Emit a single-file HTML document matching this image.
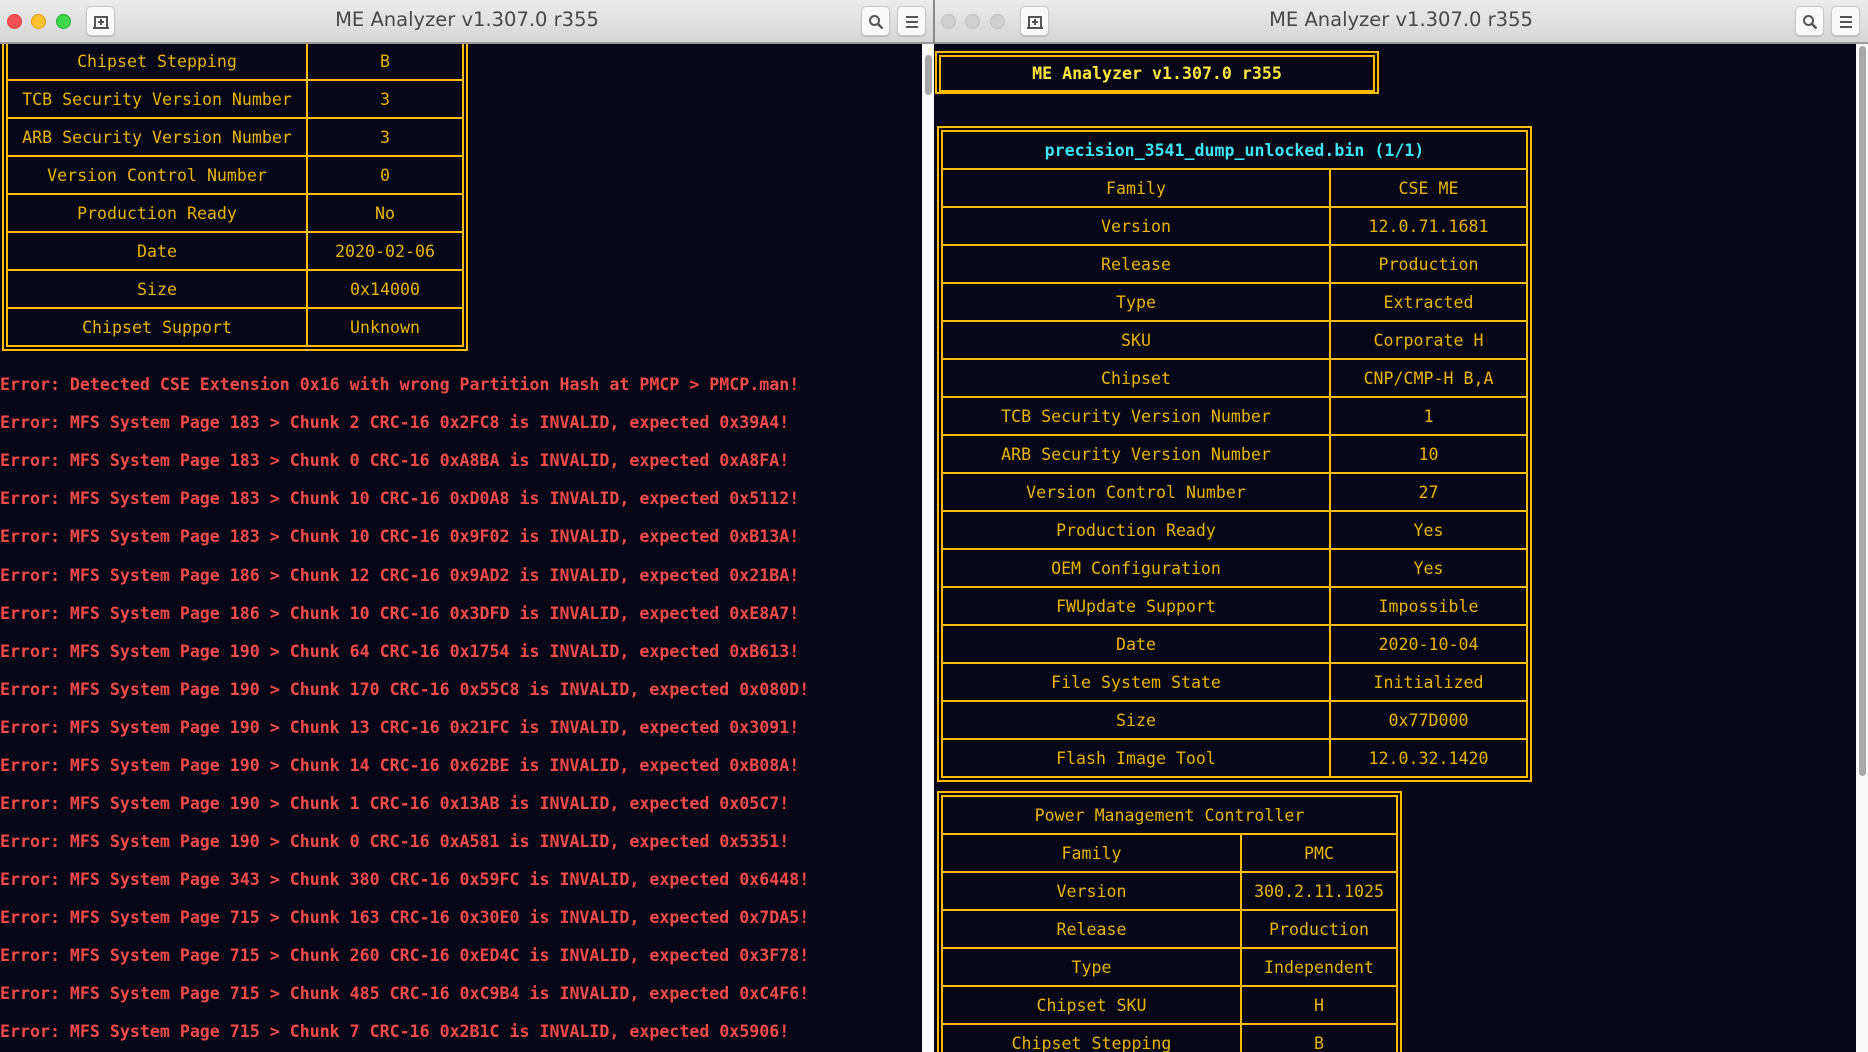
<!DOCTYPE html>
<html><head><meta charset="utf-8">
<style>
*{margin:0;padding:0;box-sizing:border-box}
html,body{width:1868px;height:1052px;overflow:hidden}
body{background:#070717;position:relative;font-family:"DejaVu Sans Mono","Liberation Mono",monospace}
.win{position:absolute;top:0;width:934px;height:1052px;overflow:hidden;background:#070717}
.tb{position:absolute;left:0;top:0;width:934px;height:44px;background:linear-gradient(#ececec,#d6d6d6);border-bottom:2px solid #9a9a9a;z-index:5}
.tb .t{position:absolute;left:0;right:0;top:8px;text-align:center;font-family:"DejaVu Sans","Liberation Sans",sans-serif;font-size:19.5px;color:#484848}
.dot{position:absolute;top:14px;width:15px;height:15px;border-radius:50%}
.btn{position:absolute;top:6px;width:29px;height:30px;background:#fafafa;border:1px solid #c8c8c8;border-radius:5px;box-shadow:0 1px 1px rgba(0,0,0,.15)}
.btn svg{position:absolute;left:6px;top:7px}
.sb{position:absolute;right:0;top:44px;width:12px;bottom:0;background:#fafafa;z-index:4}
.sb i{position:absolute;left:3px;width:7px;background:#a8a8a8;border-radius:4px}
.fr{position:absolute;border:2px solid #ffbb00;padding:2px}
table{border-collapse:collapse;width:100%}
td{border:2px solid #ffbb00;height:38px;text-align:center;color:#e8b400;font-size:16.6px;white-space:pre;padding:0}
.err{position:absolute;left:0;color:#f24a4a;font-weight:bold;font-size:16.6px;white-space:pre}
</style></head><body>

<div class="win" style="left:0">
 <div class="tb">
  <div class="dot" style="left:7px;background:#f25056;border:1px solid #e0443e"></div>
  <div class="dot" style="left:31px;background:#fbc22f;border:1px solid #e1a116"></div>
  <div class="dot" style="left:56px;background:#3ed84a;border:1px solid #27aa35"></div>
  <div class="btn" style="left:86px"><svg width="16" height="16" viewBox="0 0 16 16"><path d="M2 14V3h12v11" fill="none" stroke="#555" stroke-width="2"/><path d="M0 14h16M8 5v6M5 8h6" stroke="#555" stroke-width="2"/></svg></div>
  <div class="t">ME Analyzer v1.307.0 r355</div>
  <div class="btn" style="left:861px"><svg width="16" height="16" viewBox="0 0 16 16"><circle cx="6.5" cy="6.5" r="4.5" fill="none" stroke="#555" stroke-width="2"/><path d="M10 10l4.5 4.5" stroke="#555" stroke-width="2.4"/></svg></div>
  <div class="btn" style="left:897px"><svg width="16" height="16" viewBox="0 0 16 16"><path d="M2 3h12M2 8h12M2 13h12" stroke="#555" stroke-width="2"/></svg></div>
 </div>
 <div class="sb"><i style="top:11px;height:40px"></i></div>
 <div class="fr" style="left:2px;top:37px;width:466px">
  <table>
   <tr><td style="width:300px">Chipset Stepping</td><td>B</td></tr>
   <tr><td>TCB Security Version Number</td><td>3</td></tr>
   <tr><td>ARB Security Version Number</td><td>3</td></tr>
   <tr><td>Version Control Number</td><td>0</td></tr>
   <tr><td>Production Ready</td><td>No</td></tr>
   <tr><td>Date</td><td>2020-02-06</td></tr>
   <tr><td>Size</td><td>0x14000</td></tr>
   <tr><td>Chipset Support</td><td>Unknown</td></tr>
  </table>
 </div>
 <div class="err" style="top:375px">Error: Detected CSE Extension 0x16 with wrong Partition Hash at PMCP &gt; PMCP.man!</div>
 <div class="err" style="top:413px">Error: MFS System Page 183 &gt; Chunk 2 CRC-16 0x2FC8 is INVALID, expected 0x39A4!</div>
 <div class="err" style="top:451px">Error: MFS System Page 183 &gt; Chunk 0 CRC-16 0xA8BA is INVALID, expected 0xA8FA!</div>
 <div class="err" style="top:489px">Error: MFS System Page 183 &gt; Chunk 10 CRC-16 0xD0A8 is INVALID, expected 0x5112!</div>
 <div class="err" style="top:527px">Error: MFS System Page 183 &gt; Chunk 10 CRC-16 0x9F02 is INVALID, expected 0xB13A!</div>
 <div class="err" style="top:566px">Error: MFS System Page 186 &gt; Chunk 12 CRC-16 0x9AD2 is INVALID, expected 0x21BA!</div>
 <div class="err" style="top:604px">Error: MFS System Page 186 &gt; Chunk 10 CRC-16 0x3DFD is INVALID, expected 0xE8A7!</div>
 <div class="err" style="top:642px">Error: MFS System Page 190 &gt; Chunk 64 CRC-16 0x1754 is INVALID, expected 0xB613!</div>
 <div class="err" style="top:680px">Error: MFS System Page 190 &gt; Chunk 170 CRC-16 0x55C8 is INVALID, expected 0x080D!</div>
 <div class="err" style="top:718px">Error: MFS System Page 190 &gt; Chunk 13 CRC-16 0x21FC is INVALID, expected 0x3091!</div>
 <div class="err" style="top:756px">Error: MFS System Page 190 &gt; Chunk 14 CRC-16 0x62BE is INVALID, expected 0xB08A!</div>
 <div class="err" style="top:794px">Error: MFS System Page 190 &gt; Chunk 1 CRC-16 0x13AB is INVALID, expected 0x05C7!</div>
 <div class="err" style="top:832px">Error: MFS System Page 190 &gt; Chunk 0 CRC-16 0xA581 is INVALID, expected 0x5351!</div>
 <div class="err" style="top:870px">Error: MFS System Page 343 &gt; Chunk 380 CRC-16 0x59FC is INVALID, expected 0x6448!</div>
 <div class="err" style="top:908px">Error: MFS System Page 715 &gt; Chunk 163 CRC-16 0x30E0 is INVALID, expected 0x7DA5!</div>
 <div class="err" style="top:946px">Error: MFS System Page 715 &gt; Chunk 260 CRC-16 0xED4C is INVALID, expected 0x3F78!</div>
 <div class="err" style="top:984px">Error: MFS System Page 715 &gt; Chunk 485 CRC-16 0xC9B4 is INVALID, expected 0xC4F6!</div>
 <div class="err" style="top:1022px">Error: MFS System Page 715 &gt; Chunk 7 CRC-16 0x2B1C is INVALID, expected 0x5906!</div>
</div>

<div class="win" style="left:934px">
 <div class="tb">
  <div class="dot" style="left:7px;background:#d0d0d0;border:1px solid #c0c0c0"></div>
  <div class="dot" style="left:31px;background:#d0d0d0;border:1px solid #c0c0c0"></div>
  <div class="dot" style="left:56px;background:#d0d0d0;border:1px solid #c0c0c0"></div>
  <div class="btn" style="left:86px"><svg width="16" height="16" viewBox="0 0 16 16"><path d="M2 14V3h12v11" fill="none" stroke="#555" stroke-width="2"/><path d="M0 14h16M8 5v6M5 8h6" stroke="#555" stroke-width="2"/></svg></div>
  <div class="t">ME Analyzer v1.307.0 r355</div>
  <div class="btn" style="left:861px"><svg width="16" height="16" viewBox="0 0 16 16"><circle cx="6.5" cy="6.5" r="4.5" fill="none" stroke="#555" stroke-width="2"/><path d="M10 10l4.5 4.5" stroke="#555" stroke-width="2.4"/></svg></div>
  <div class="btn" style="left:897px"><svg width="16" height="16" viewBox="0 0 16 16"><path d="M2 3h12M2 8h12M2 13h12" stroke="#555" stroke-width="2"/></svg></div>
 </div>
 <div class="sb"><i style="top:2px;height:730px"></i></div>

 <div class="fr" style="left:2px;top:51px;width:250px;width:249px"></div>
 <div class="fr" style="left:2px;top:51px;width:250px;display:none"></div>
 <div class="fr" style="left:2px;top:51px;width:250px;display:none"></div>
 <div class="fr" style="left:1px;top:51px;width:250px;display:none"></div>
 <div class="fr" style="left:1px;top:51px;width:444px;height:43px;border-color:#ffbb00;background:#070717">
  <table style="height:35px"><tr><td style="color:#ffe640;font-weight:bold;height:35px">ME Analyzer v1.307.0 r355</td></tr></table>
 </div>

 <div class="fr" style="left:3px;top:126px;width:595px">
  <table>
   <tr><td colspan="2" style="color:#3fe6f2;font-weight:bold">precision_3541_dump_unlocked.bin (1/1)</td></tr>
   <tr><td style="width:388px">Family</td><td>CSE ME</td></tr>
   <tr><td>Version</td><td>12.0.71.1681</td></tr>
   <tr><td>Release</td><td>Production</td></tr>
   <tr><td>Type</td><td>Extracted</td></tr>
   <tr><td>SKU</td><td>Corporate H</td></tr>
   <tr><td>Chipset</td><td>CNP/CMP-H B,A</td></tr>
   <tr><td>TCB Security Version Number</td><td>1</td></tr>
   <tr><td>ARB Security Version Number</td><td>10</td></tr>
   <tr><td>Version Control Number</td><td>27</td></tr>
   <tr><td>Production Ready</td><td>Yes</td></tr>
   <tr><td>OEM Configuration</td><td>Yes</td></tr>
   <tr><td>FWUpdate Support</td><td>Impossible</td></tr>
   <tr><td>Date</td><td>2020-10-04</td></tr>
   <tr><td>File System State</td><td>Initialized</td></tr>
   <tr><td>Size</td><td>0x77D000</td></tr>
   <tr><td>Flash Image Tool</td><td>12.0.32.1420</td></tr>
  </table>
 </div>

 <div class="fr" style="left:3px;top:791px;width:465px">
  <table>
   <tr><td colspan="2">Power Management Controller</td></tr>
   <tr><td style="width:299px">Family</td><td>PMC</td></tr>
   <tr><td>Version</td><td>300.2.11.1025</td></tr>
   <tr><td>Release</td><td>Production</td></tr>
   <tr><td>Type</td><td>Independent</td></tr>
   <tr><td>Chipset SKU</td><td>H</td></tr>
   <tr><td>Chipset Stepping</td><td>B</td></tr>
  </table>
 </div>
</div>

<div style="position:absolute;left:933px;top:0;width:2px;height:44px;background:#8a8a8a;z-index:9"></div>
</body></html>
